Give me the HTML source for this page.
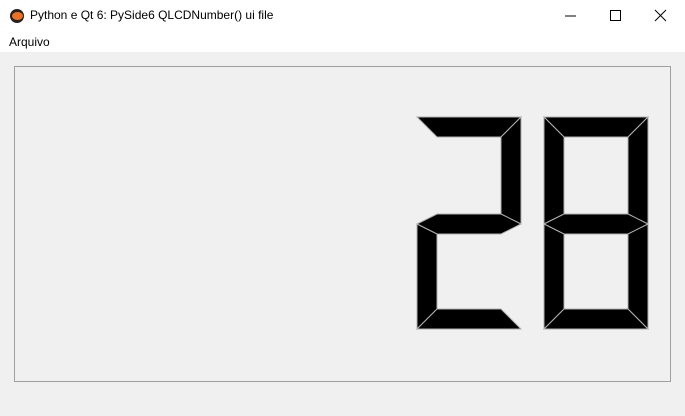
<!DOCTYPE html>
<html><head><meta charset="utf-8"><style>
body{margin:0;width:685px;height:416px;background:#f0f0f0;font-family:"Liberation Sans",sans-serif;position:relative;overflow:hidden}
.title{position:absolute;left:0;top:0;width:685px;height:31px;background:#fff;}
.title span{position:absolute;left:30px;top:8px;font-size:12px;color:#000}
.menu{position:absolute;left:0;top:31px;width:685px;height:21px;background:#fff}
.menu span{position:absolute;left:9px;top:4px;font-size:12px}
.frame{position:absolute;left:14px;top:66px;width:655px;height:314px;border:1px solid #a0a0a0}
</style></head><body>
<div class="title">
<svg style="position:absolute;left:9px;top:8px" width="16" height="16"><circle cx="8" cy="8" r="7" fill="#222"/><ellipse cx="8.5" cy="8" rx="5.5" ry="4" fill="#f07020"/></svg>
<span>Python e Qt 6: PySide6 QLCDNumber() ui file</span>
<svg style="position:absolute;left:560px;top:8px" width="115" height="16" stroke="#000" stroke-width="1" fill="none">
<line x1="5" y1="8" x2="16" y2="8"/><rect x="50.5" y="2.5" width="10" height="10"/><line x1="95" y1="2" x2="106" y2="13"/><line x1="106" y1="2" x2="95" y2="13"/></svg>
</div>
<div class="menu"><span>Arquivo</span></div>
<div class="frame"></div>
<svg style="position:absolute;left:0;top:0" width="685" height="416">
<g fill="#000" stroke="#b0b0b0" stroke-width="1">
<polygon points="417,117 521,117 501,137 437,137"/>
<polygon points="521,117 521,224 501,214 501,137"/>
<polygon points="417,224 437,214 501,214 521,224 501,234 437,234"/>
<polygon points="417,224 437,234 437,309 417,329"/>
<polygon points="417,329 437,309 501,309 521,329"/>
</g>
<g fill="#000" stroke="#b0b0b0" stroke-width="1" transform="translate(127,0)">
<polygon points="417,117 521,117 501,137 437,137"/>
<polygon points="521,117 521,224 501,214 501,137"/>
<polygon points="417,117 437,137 437,214 417,224"/>
<polygon points="417,224 437,214 501,214 521,224 501,234 437,234"/>
<polygon points="417,224 437,234 437,309 417,329"/>
<polygon points="521,224 521,329 501,309 501,234"/>
<polygon points="417,329 437,309 501,309 521,329"/>
</g>
</svg>
</body></html>
